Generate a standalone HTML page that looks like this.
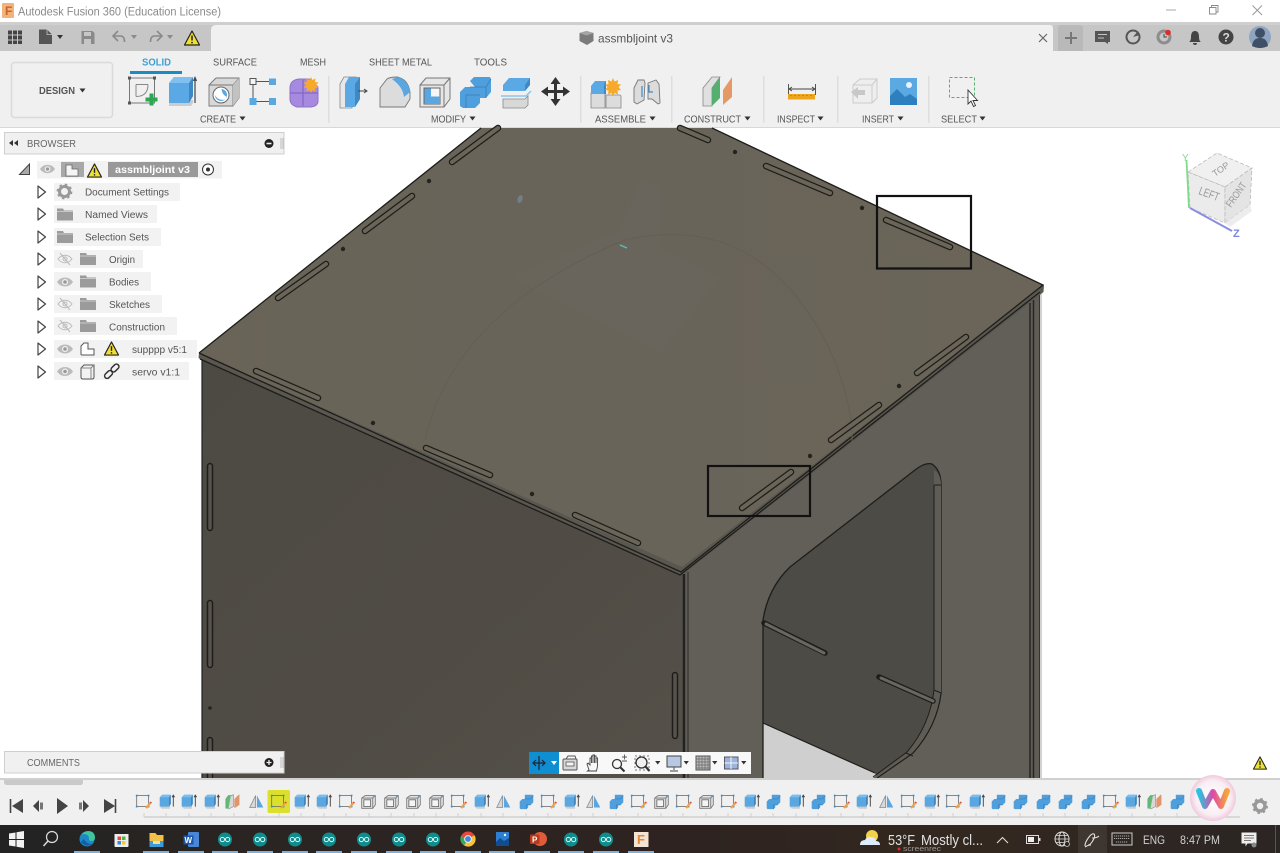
<!DOCTYPE html>
<html><head><meta charset="utf-8"><title>Autodesk Fusion 360</title>
<style>
html,body{margin:0;padding:0;background:#fff;width:1280px;height:853px;overflow:hidden}
svg{display:block;position:absolute;left:0;top:0;filter:blur(.35px)}
text{font-family:"Liberation Sans",sans-serif}
.tb{font-size:10px;fill:#555}
.lb{font-size:10px;fill:#555}
.tr{font-size:10px;fill:#555}
</style></head><body>
<svg width="1280" height="853" viewBox="0 0 1280 853" xmlns="http://www.w3.org/2000/svg">
<defs>
<linearGradient id="tbg" x1="0" x2="1" y1="0" y2="0"><stop offset="0" stop-color="#232323"/><stop offset=".2" stop-color="#2a2422"/><stop offset=".55" stop-color="#2e2320"/><stop offset=".75" stop-color="#33281f"/><stop offset="1" stop-color="#2b2523"/></linearGradient>
<linearGradient id="wg" x1="0" x2="1" y1="0" y2="0"><stop offset="0" stop-color="#27c4e0"/><stop offset=".5" stop-color="#e04aa8"/><stop offset="1" stop-color="#f6a53a"/></linearGradient>
<radialGradient id="wb"><stop offset="0" stop-color="#fff"/><stop offset=".75" stop-color="#f8eef4"/><stop offset="1" stop-color="#f2c9dc"/></radialGradient>
<linearGradient id="lf" x1="0" x2="1" y1="0" y2="1"><stop offset="0" stop-color="#4d4a44"/><stop offset=".6" stop-color="#504c45"/><stop offset="1" stop-color="#55514a"/></linearGradient>
<linearGradient id="topf" x1="0" x2="1" y1="0" y2="0"><stop offset="0" stop-color="#696457"/><stop offset=".5" stop-color="#69645a"/><stop offset="1" stop-color="#6a6558"/></linearGradient>

<symbol id="sk" viewBox="0 0 20 20" overflow="visible"><rect x="2" y="3" width="14" height="13" fill="none" stroke="#666" stroke-width=".9"/><rect x="1" y="2" width="2" height="2" fill="#2f8fd0"/><rect x="15" y="2" width="2" height="2" fill="#2f8fd0"/><rect x="1" y="15" width="2" height="2" fill="#2f8fd0"/><rect x="15" y="15" width="2" height="2" fill="#2f8fd0"/><path d="M12 17l5-6 2 1.500-5 6z" fill="#f0a040"/><path d="M17 11l2 1.500 1-1.500-2-1z" fill="#e05040"/></symbol>
<symbol id="ext" viewBox="0 0 20 20" overflow="visible"><path d="M3 15v2.500l2 1h9v-3.500z" fill="#ccc"/><path d="M2 5l3-3h10v11l-2 3H2z" fill="#5aa6e0"/><path d="M15 2v11l-2 3V5z" fill="#3f86c0"/><path d="M2 5l3-3h10l-2 3z" fill="#7cbcec"/><path d="M18 16V3M16.500 5L18 2.500 19.500 5" stroke="#444" fill="none" stroke-width="1.100"/></symbol>
<symbol id="cmb" viewBox="0 0 20 20" overflow="visible"><path d="M8 2h9l1 1v8l-3 3h-3v3l-2 2H3l-1-1V10l3-3h3z" fill="#4f9fdc"/><path d="M8 7h7l3-4M10 19v-5h5" stroke="#3a80bb" fill="none" stroke-width=".8"/></symbol>
<symbol id="tri" viewBox="0 0 20 20" overflow="visible"><path d="M9 3v14H2z" fill="#d8d8d8" stroke="#888" stroke-width=".9"/><path d="M10.500 3v14H18z" fill="#5aa6e0"/></symbol>
<symbol id="shl" viewBox="0 0 20 20" overflow="visible"><path d="M2 6l4-3h12v11l-3 4H2z" fill="#e2e2e2" stroke="#777"/><path d="M6 3v0M15 18V6l3-3M2 6h13" stroke="#777" fill="none"/><rect x="4.500" y="8" width="8" height="8" fill="#f4f4f4" stroke="#666"/><path d="M18 3l-3 3V4z" fill="#4f9fdc"/></symbol>
<symbol id="con" viewBox="0 0 20 20" overflow="visible"><path d="M1 7l3-4h3v12l-3 3H1z" fill="#66b878" stroke="#4a9a5c" stroke-width=".6"/><path d="M7 3l3-1v14l-6 3" fill="#d8d8d8" stroke="#888" stroke-width=".7"/><path d="M11 7l5-5h1v12l-6 4z" fill="#e0956a"/></symbol>
<symbol id="warn" viewBox="0 0 16 16" overflow="visible"><path d="M8 1L15.500 15H.500z" fill="#f0e030" stroke="#222" stroke-width="1.200" stroke-linejoin="round"/><path d="M8 5.500v5" stroke="#222" stroke-width="1.500"/><circle cx="8" cy="12.600" r=".9" fill="#222"/></symbol>
<symbol id="exp" viewBox="0 0 10 14" overflow="visible"><path d="M1 1l7.500 6L1 13z" fill="#fff" stroke="#444" stroke-width="1.200" stroke-linejoin="round"/></symbol>
<symbol id="eye" viewBox="0 0 16 10" overflow="visible"><path d="M0 5c4-6 12-6 16 0-4 6-12 6-16 0z" fill="#bbb"/><circle cx="8" cy="5" r="3" fill="#f2f2f2"/><circle cx="8" cy="5" r="1.800" fill="#999"/></symbol>
<symbol id="eyeo" viewBox="0 0 16 12" overflow="visible"><path d="M1 6c4-5 10-5 14 0-4 5-10 5-14 0z" fill="none" stroke="#bbb"/><circle cx="8" cy="6" r="2" fill="none" stroke="#bbb"/><path d="M3 0l10 12" stroke="#bbb"/></symbol>
<symbol id="fld" viewBox="0 0 16 12" overflow="visible"><path d="M0 0h6l1 2h9v10H0z" fill="#9b9b9b"/><rect y="2.500" width="16" height="1" fill="#c8c8c8"/></symbol>
<symbol id="ard" viewBox="0 0 16 16" overflow="visible"><circle cx="8" cy="8" r="7.500" fill="#0f8c8c"/><circle cx="5.200" cy="8" r="2.300" fill="none" stroke="#d8f4f4" stroke-width="1.100"/><circle cx="10.800" cy="8" r="2.300" fill="none" stroke="#d8f4f4" stroke-width="1.100"/></symbol>
<symbol id="tt" viewBox="0 0 6 4" overflow="visible"><path d="M0 0h6L3 4z" fill="#333"/></symbol>
</defs>

<!-- title bar -->
<rect width="1280" height="22" fill="#fff"/>
<rect x="2" y="3" width="12" height="15" rx="1" fill="#f3b27a"/>
<text x="5" y="15" style="font-size:12px;font-weight:bold" fill="#c9622a">F</text>
<text x="18" y="15.500" style="font-size:11.500px" fill="#8a8a8a" textLength="203" lengthAdjust="spacingAndGlyphs">Autodesk Fusion 360 (Education License)</text>
<path d="M1166 10h10" stroke="#aaa" stroke-width="1"/>
<path d="M1209.500 7.500h6.500v6.500h-6.500zM1211.500 7.500v-2h6.500v6.500h-2" fill="none" stroke="#888" stroke-width=".9"/>
<path d="M1252.500 5.500l9.500 9.500M1262 5.500l-9.500 9.500" stroke="#999" stroke-width="1"/>

<!-- top bar -->
<rect y="22" width="1280" height="3" fill="#cfcfcf"/>
<rect y="25" width="1280" height="26" fill="#c6c6c6"/>
<path d="M211 51V30q0-5 5-5h834q3 0 3 3v23z" fill="#f0f0f0"/>
<g fill="#444"><rect x="8" y="30.500" width="4" height="4"/><rect x="13" y="30.500" width="4" height="4"/><rect x="18" y="30.500" width="4" height="4"/><rect x="8" y="35.500" width="4" height="4"/><rect x="13" y="35.500" width="4" height="4"/><rect x="18" y="35.500" width="4" height="4"/><rect x="8" y="40.500" width="4" height="3.500"/><rect x="13" y="40.500" width="4" height="3.500"/><rect x="18" y="40.500" width="4" height="3.500"/></g>
<path d="M39 29.500h8l5 5V44H39z" fill="#555"/><path d="M47 29.500v5h5" fill="none" stroke="#c6c6c6" stroke-width=".8"/>
<use href="#tt" x="57" y="35" width="6" height="4"/>
<path d="M81.500 31h11l2 2v11h-13z" fill="#8a8a8a"/><rect x="84" y="32" width="7" height="4" fill="#c6c6c6"/><rect x="84" y="39" width="7" height="5" fill="#c6c6c6"/>
<path d="M118 31l-5 5 5 5M113.500 36h7q4 0 4 6" fill="none" stroke="#8a8a8a" stroke-width="1.600"/>
<path d="M131 35h6l-3 4z" fill="#8a8a8a"/>
<path d="M157 31l5 5-5 5M161.500 36h-7q-4 0-4 6" fill="none" stroke="#8a8a8a" stroke-width="1.600"/>
<path d="M167 35h6l-3 4z" fill="#8a8a8a"/>
<use href="#warn" x="184" y="30" width="16" height="16"/>
<path d="M579.500 33l7-2 7 2v8l-6.500 4-7.500-4z" fill="#7b7b7b"/><path d="M579.500 33l7 2.500 7-2.500-7-2z" fill="#a5a5a5"/>
<text x="598" y="42.500" style="font-size:12px" fill="#555" textLength="75" lengthAdjust="spacingAndGlyphs">assmbljoint v3</text>
<path d="M1039 34l8 8M1047 34l-8 8" stroke="#666" stroke-width="1.200"/>
<path d="M1058 51V28q0-3 3-3h19q3 0 3 3v23z" fill="#b9b9b9"/>
<path d="M1071 32v12M1065 38h12" stroke="#777" stroke-width="2"/>
<path d="M1095 31h15v11h-2v2l-3-2h-10z" fill="#555"/><path d="M1098 34.500h9M1098 38h6" stroke="#c6c6c6"/>
<circle cx="1133" cy="37" r="6.500" fill="none" stroke="#555" stroke-width="2"/><path d="M1133 37l5-6 2 4z" fill="#555"/>
<circle cx="1164" cy="37" r="7.500" fill="#8d8d8d"/><circle cx="1164" cy="37" r="4.500" fill="#c6c6c6"/><path d="M1164 34v3h3" stroke="#444" fill="none"/><circle cx="1168" cy="32.500" r="2.800" fill="#dd2c2c"/>
<path d="M1189 42q2-1 2-5 0-6 4-6t4 6q0 4 2 5zM1193 43h4q0 2-2 2t-2-2z" fill="#444"/>
<circle cx="1226" cy="37" r="7.500" fill="#444"/><text x="1222.500" y="41.500" style="font-size:12px;font-weight:bold" fill="#d8d8d8">?</text>
<circle cx="1260" cy="37" r="11" fill="#8ea4c0"/><circle cx="1260" cy="33" r="5" fill="#3e4f66"/><path d="M1252 46q1-8 8-8t8 8q-4 2-8 2t-8-2z" fill="#3e4f66"/>

<!-- toolbar -->
<rect y="51" width="1280" height="76" fill="#f0f0f0"/>
<rect y="127" width="1280" height="1.500" fill="#d8d8d8"/>
<rect x="11.500" y="62.500" width="101" height="55" rx="3" fill="#f0f0f0" stroke="#dadada" stroke-width="1.500"/>
<text x="39" y="94" style="font-size:10.500px;font-weight:bold" fill="#555" textLength="36" lengthAdjust="spacingAndGlyphs">DESIGN</text>
<use href="#tt" x="79.500" y="88.500" width="6" height="4"/>
<text x="142" y="65.500" style="font-size:10.500px;font-weight:bold" fill="#3d9fd3" textLength="29" lengthAdjust="spacingAndGlyphs">SOLID</text>
<rect x="130" y="71" width="52" height="3" fill="#1a8cc4"/>
<text class="tb" x="213" y="65.500" textLength="44" lengthAdjust="spacingAndGlyphs">SURFACE</text>
<text class="tb" x="300" y="65.500" textLength="26" lengthAdjust="spacingAndGlyphs">MESH</text>
<text class="tb" x="369" y="65.500" textLength="63" lengthAdjust="spacingAndGlyphs">SHEET METAL</text>
<text class="tb" x="474" y="65.500" textLength="33" lengthAdjust="spacingAndGlyphs">TOOLS</text>

<text class="lb" x="200" y="122.500" textLength="36" lengthAdjust="spacingAndGlyphs">CREATE</text><use href="#tt" x="239.500" y="116.500" width="6" height="4"/>
<text class="lb" x="431" y="122.500" textLength="35" lengthAdjust="spacingAndGlyphs">MODIFY</text><use href="#tt" x="469.500" y="116.500" width="6" height="4"/>
<text class="lb" x="595" y="122.500" textLength="51" lengthAdjust="spacingAndGlyphs">ASSEMBLE</text><use href="#tt" x="649.500" y="116.500" width="6" height="4"/>
<text class="lb" x="684" y="122.500" textLength="57" lengthAdjust="spacingAndGlyphs">CONSTRUCT</text><use href="#tt" x="744.500" y="116.500" width="6" height="4"/>
<text class="lb" x="777" y="122.500" textLength="38" lengthAdjust="spacingAndGlyphs">INSPECT</text><use href="#tt" x="817.500" y="116.500" width="6" height="4"/>
<text class="lb" x="862" y="122.500" textLength="32" lengthAdjust="spacingAndGlyphs">INSERT</text><use href="#tt" x="897.500" y="116.500" width="6" height="4"/>
<text class="lb" x="941" y="122.500" textLength="36" lengthAdjust="spacingAndGlyphs">SELECT</text><use href="#tt" x="979.500" y="116.500" width="6" height="4"/>
<g fill="#dedede"><rect x="328" y="76" width="1.500" height="47"/><rect x="580" y="76" width="1.500" height="47"/><rect x="671" y="76" width="1.500" height="47"/><rect x="763" y="76" width="1.500" height="47"/><rect x="837" y="76" width="1.500" height="47"/><rect x="928" y="76" width="1.500" height="47"/></g>

<!-- create icons -->
<rect x="129.500" y="78" width="25" height="25" fill="none" stroke="#777" stroke-width="1"/>
<g fill="#555"><rect x="128" y="76.500" width="3" height="3"/><rect x="153" y="76.500" width="3" height="3"/><rect x="128" y="101.500" width="3" height="3"/></g>
<path d="M136 84.500h12M136 84.500v12M148 84.500q0 12-12 12" fill="none" stroke="#888" stroke-width="1"/>
<path d="M149.500 93.500h4v4h4v4h-4v4h-4v-4h-4v-4h4z" fill="#2aa84f"/>
<path d="M169 100v6h22l2-3v-3z" fill="#ccc"/>
<path d="M169 83l5-6h19v19l-4 7h-20z" fill="#5aa8e4"/><path d="M193 77v19l-4 7V83z" fill="#3f88c6"/><path d="M169 83l5-6h19l-4 6z" fill="#80c0f0"/>
<path d="M195 103V78M193.500 81l1.500-3.500 1.500 3.500" stroke="#444" fill="none" stroke-width="1.200"/>
<path d="M209 85l7-7h23v20l-6 8h-24z" fill="#d8d8d8" stroke="#777" stroke-width=".9"/><path d="M209 85h24v21M233 85l6-7" stroke="#777" fill="none" stroke-width=".9"/><path d="M233 85v21l6-8V78z" fill="#c2c2c2"/>
<circle cx="221" cy="95" r="8" fill="#fff" stroke="#666"/><path d="M215 95a6 6 0 1 0 6.500-6c1 5 2 6 5.500 8-2 5-10 3-12-2z" fill="#5aa6e0"/>
<rect x="250" y="78.500" width="6" height="6" fill="#f4f4f4" stroke="#555"/><rect x="269" y="78.500" width="7" height="6.500" fill="#5aa8e0"/><rect x="249.500" y="98" width="7" height="7" fill="#5aa8e0"/><rect x="269" y="98" width="7" height="7" fill="#5aa8e0"/>
<path d="M256 81.500h13M253 85v13M256.500 101.500h12.500" stroke="#555"/>
<path d="M290 88q0-8 9-9l10 0 9 8v14q0 5-7 6h-14q-7-2-7-8z" fill="#a58ae0" stroke="#8f72c8"/><path d="M290 93h28M303 80v26" stroke="#7d5fc0"/>
<path d="M311 77l1.500 3 3-1.500-.5 3.500 3.500.5-2.500 2.500 2.500 2.500-3.500.5.5 3.500-3-1.500-1.500 3-1.500-3-3 1.500.5-3.500-3.500-.5 2.500-2.500-2.500-2.500 3.500-.5-.5-3.500 3 1.500z" fill="#f6a92a"/>
<!-- modify icons -->
<path d="M340 84l4-7h12l-4 7v24h-12z" fill="#e8e8e8" stroke="#888" stroke-width=".8"/>
<path d="M345 84l4-7h11v22l-5 8h-10z" fill="#5aa8e4"/><path d="M360 77v22l-5 8V84z" fill="#3f88c6"/>
<path d="M358 91h9M364 89l3 2-3 2" stroke="#444" fill="none"/>
<path d="M380 88l7-9q3-2 10-2 11 2 13 15v7l-5 8h-25z" fill="#dcdcdc" stroke="#777" stroke-width=".9"/>
<path d="M392 79q8-3 10 0 7 4 8 13l-6 5q-1-10-12-18z" fill="#5aa6e0"/>
<path d="M420 85l6-7h24v21l-6 8h-24z" fill="#e6e6e6" stroke="#777"/><path d="M420 85h24v22M444 85l6-7" fill="none" stroke="#777"/>
<rect x="424" y="88" width="16" height="16" fill="#f6f6f6" stroke="#666"/><path d="M424.500 88.500h6.500v8h9v7.500h-15.500z" fill="#5aa6e0"/>
<path d="M470 81l4-4h16l1 2v13l-5 6h-6v5l-5 5h-12l-3-2V92l5-5h10z" fill="#4f9fdc"/><path d="M470 87h16l5-8M486 98V87M466 108V95h14" stroke="#3a7fb8" fill="none" stroke-width=".8"/>
<path d="M503 85l6-7h19l2 0v7l-5 6h-22z" fill="#5aa8e4"/><path d="M525 85l5-7v7l-5 6z" fill="#3f88c6"/>
<path d="M501 96h25l5-5" stroke="#8ac4ec" fill="none" stroke-width="1.500"/>
<path d="M503 99h22l3-3v9l-3 3h-22z" fill="#d8d8d8" stroke="#888" stroke-width=".8"/>
<g fill="#333"><path d="M555.500 77l5 7h-3.500v6h6v-3.500l7 5-7 5v-3.500h-6v6h3.500l-5 7-5-7h3.500v-6h-6v3.500l-7-5 7-5v3.500h6v-6h-3.500z"/></g>
<!-- assemble -->
<path d="M591 93h14v15h-14zM606 95h14l1 1v12h-15z" fill="#dcdcdc" stroke="#888" stroke-width=".8"/>
<path d="M591 86l4-5h11v13h-15z" fill="#5aa8e4"/><path d="M606 81v13l-2 0V84z" fill="#3f88c6"/>
<path d="M613 78l1.500 3.500 3.500-1.500-.5 4 3.500.5-2.500 2.500 2.500 3-3.500.5.5 4-3.500-1.500-1.500 3.500-1.500-3.500-3.500 1.500.5-4-3.500-.5 2.500-3-2.500-2.500 3.500-.5-.5-4 3.500 1.500z" fill="#f6a92a"/>
<path d="M634 88l4-8h6l1 3-1 17-7 4-3-2z" fill="#dcdcdc" stroke="#777" stroke-width=".9"/>
<path d="M648 83l8-3 3 4 1 19-2 1-6-5-4 0z" fill="#dcdcdc" stroke="#777" stroke-width=".9"/>
<path d="M642 86v11M649 85v7h4" stroke="#3f88c6" fill="none" stroke-width="1.200"/>
<!-- construct -->
<path d="M703 88l9-11h8l-8 11v18h-9z" fill="#e0e0e0" stroke="#888" stroke-width=".8"/><path d="M712 88l8-11v21l-8 8z" fill="#55b070"/><path d="M723 90l9-13v20l-9 8z" fill="#e59a66"/>
<!-- inspect -->
<path d="M788.500 84v11M815.500 84v11M790 89h24M792 87l-3 2 3 2M812 87l3 2-3 2" stroke="#444" fill="none" stroke-width=".9"/>
<rect x="788" y="94" width="27" height="5.500" fill="#eea51e"/>
<path d="M791 95v1M795 95v1M799 95v1M803 95v1M807 95v1M811 95v1" stroke="#a06a10"/>
<!-- insert -->
<path d="M853 85l7-6h17v19l-5 5h-19z" fill="#eee" stroke="#ccc"/><path d="M853 85h19v18M872 85l5-6" stroke="#ccc" fill="none"/>
<path d="M851 92l7-5v3h7v5h-7v4z" fill="#c8c8c8"/>
<rect x="890" y="78" width="27" height="27" fill="#5aa9e2"/><circle cx="909" cy="85" r="3" fill="#e8f4ff"/><path d="M890 105V96l7-7 8 8 5-3 7 5v6z" fill="#2d7fbd"/>
<!-- select -->
<rect x="949.500" y="77.500" width="25" height="20" fill="none" stroke="#55b070" stroke-dasharray="3 2"/>
<path d="M968 90v14l3-3 2.500 5.500 2-1-2.500-5h4.500z" fill="#fff" stroke="#333" stroke-width=".9"/>

<!-- viewport -->
<rect y="128" width="1280" height="651" fill="#fff"/>
<!-- model -->
<rect x="763" y="720" width="120" height="58" fill="#cfcfcf"/>
<path d="M202 355L686 570V778H202z" fill="url(#lf)"/>
<path d="M684 570L1031 296V778H684z" fill="#625f58"/>
<path d="M1031 296l9-8V778h-9z" fill="#5f5c55"/>
<path d="M1030 303V778M1033.500 300V778" stroke="#262522" stroke-width="1.500"/>
<path d="M1039.500 292V778" stroke="#333" stroke-width="1"/>
<path d="M1041 290V778" stroke="#a5a5a5" stroke-width="1"/>
<path d="M199 353L481 128H712L1043 285 1040 292 681 572z" fill="url(#topf)"/>
<path d="M199 353l-.5 5 3 2 479 215 3-1 360-282 .5-7-362 282z" fill="#5a5750"/>
<path d="M199 353L481 128M712 128L1043 285 681 572 199 353" fill="none" stroke="#1e1d1a" stroke-width="1.300"/>
<path d="M200 359L680 575 1040 292" fill="none" stroke="#1e1d1a" stroke-width="1.300"/>
<path d="M684 574V778" stroke="#222" stroke-width="2.500"/><path d="M688 572V778" stroke="#2a2926" stroke-width="1"/>
<path d="M202 360V778" stroke="#222" stroke-width="1.200"/>
<!-- ghost -->
<g opacity=".05"><path d="M515 275l105-45 20-50 20 8v60l60 30-60 75-140-70z" fill="#7a8a88"/></g>
<path d="M425 440q30-130 200-200 130-30 200 100 35 70 25 130" fill="none" stroke="#645f53" stroke-width="1"/>
<ellipse cx="520" cy="199" rx="2.500" ry="4" transform="rotate(20 520 199)" fill="#717f86"/><path d="M620 245l7 3" stroke="#58c0b4" stroke-width="1.300"/>
<!-- opening -->
<path d="M763 778V620Q768 588 790 567L915 470Q925 462 932 464 941 470 941 485V693Q937 726 913 753L877 778H875L763 723Z" fill="#4d4b45"/>
<path d="M763 723L875 773 877 778H763z" fill="#cfcfcf"/>
<path d="M763 778V620Q768 588 790 567L915 470Q925 462 932 464 941 470 941 485V693Q937 726 913 753L877 778" fill="none" stroke="#1e1d1a" stroke-width="1.300"/>
<path d="M763 723L875 773" stroke="#1e1d1a" stroke-width="1.200"/>
<path d="M934 470Q941 474 941 485V693Q937 726 913 753L877 778H873L907 752Q930 725 934 690z" fill="#5f5c55"/>
<path d="M941 693Q937 726 913 753L877 778M934 485V690Q930 725 907 752L873 777M934 485L941 485M934 690L941 693M906 753L913 756" fill="none" stroke="#1e1d1a" stroke-width="1"/>
<path d="M764 623L825 653" stroke="#1e1d1a" stroke-width="5.500" stroke-linecap="round"/><path d="M766 624L824 653" stroke="#6a675f" stroke-width="3" stroke-linecap="round"/>
<path d="M879 677L933 701" stroke="#1e1d1a" stroke-width="5.500" stroke-linecap="round"/><path d="M881 678L933 701" stroke="#6a675f" stroke-width="3" stroke-linecap="round"/>
<!-- top slots -->
<g fill="none" stroke-linecap="round">
<g stroke="#1e1d1a" stroke-width="6.500">
<path d="M452 162L498 128M365 231L412 196M278 298L326 264M256 371L318 398M426 448L490 475M575 515L638 543M742 508L791 472M831 440L879 405M917 373L966 337M886 220L950 247M766 166L830 193M680 128L708 140M210 466V528M210 603V665M210 740V778M675 675V736"/>
</g>
<g stroke="#6a6558" stroke-width="4">
<path d="M452 162L498 128M365 231L412 196M278 298L326 264M256 371L318 398M426 448L490 475M575 515L638 543M742 508L791 472M831 440L879 405M917 373L966 337M886 220L950 247M766 166L830 193M680 128L708 140"/>
</g>
<g stroke="#57534c" stroke-width="3.500"><path d="M210 466V528M210 603V665M210 740V778M675 675V736"/></g>
</g>
<g fill="#24231f"><circle cx="429" cy="181" r="2.200"/><circle cx="343" cy="249" r="2.200"/><circle cx="373" cy="423" r="2.200"/><circle cx="532" cy="494" r="2.200"/><circle cx="810" cy="456" r="2.200"/><circle cx="899" cy="386" r="2.200"/><circle cx="862" cy="208" r="2.200"/><circle cx="735" cy="152" r="2.200"/><circle cx="210" cy="708" r="1.800"/></g>
<rect x="877" y="196" width="94" height="72.500" fill="none" stroke="#111" stroke-width="2.200"/>
<rect x="708" y="466" width="102" height="50" fill="none" stroke="#111" stroke-width="2.200"/>

<!-- viewcube -->
<path d="M1188 172l29-19 35 15-27 19z" fill="#f0f0f0" stroke="#bbb" stroke-dasharray="4 2" stroke-width=".8"/>
<path d="M1188 172l37 15v36l-35-15z" fill="#ebebeb" stroke="#bbb" stroke-dasharray="4 2" stroke-width=".8"/>
<path d="M1225 187l27-19-2 37-25 18z" fill="#e4e4e4" stroke="#bbb" stroke-dasharray="4 2" stroke-width=".8"/>
<path d="M1225 223l25-18 2 6-22 16z" fill="#ededed"/>
<text x="0" y="0" transform="translate(1215 177) rotate(-35)" style="font-size:9px" fill="#999">TOP</text>
<text x="0" y="0" transform="translate(1198 194) rotate(20) scale(.95 1.300)" style="font-size:9px" fill="#999">LEFT</text>
<text x="0" y="0" transform="translate(1231 208) rotate(-55) scale(.95 1.200)" style="font-size:8.500px" fill="#999">FRONT</text>
<path d="M1186.500 160l2.500 48" stroke="#80dc8c" stroke-width="1.800"/>
<path d="M1190 208l42 23" stroke="#8a8ee0" stroke-width="2"/>
<text x="1182" y="161" style="font-size:10px" fill="#80dc8c">Y</text>
<text x="1233" y="237" style="font-size:11px;font-weight:bold" fill="#7e86e0">Z</text>

<!-- browser -->
<rect x="4.500" y="132.500" width="279.500" height="21.500" fill="#f0f0f0" stroke="#cfcfcf"/>
<path d="M13 140v6l-4-3zM18 140v6l-4-3z" fill="#333"/>
<text x="27" y="147" style="font-size:10px" fill="#666" textLength="49" lengthAdjust="spacingAndGlyphs">BROWSER</text>
<circle cx="269" cy="143.500" r="4.500" fill="#222"/><rect x="266.500" y="142.700" width="5" height="1.600" fill="#f0f0f0"/>
<path d="M281 138v11M283 138v11" stroke="#bbb"/>

<g fill="#f2f2f2"><rect x="37" y="161" width="185" height="17.500"/><rect x="54" y="183" width="126" height="18"/><rect x="54" y="205" width="103" height="18"/><rect x="54" y="228" width="107" height="18"/><rect x="54" y="250" width="89" height="18"/><rect x="54" y="272" width="97" height="19"/><rect x="54" y="295" width="108" height="18"/><rect x="54" y="317" width="123" height="18"/><rect x="54" y="340" width="143" height="18"/><rect x="54" y="362" width="135" height="18"/></g>
<path d="M19.500 174.500L29.500 164v10.500z" fill="#aaa" stroke="#444" stroke-width="1"/>
<use href="#eye" x="40" y="164" width="15" height="10"/>
<rect x="61" y="162" width="23" height="15" fill="#a8a8a8"/>
<path d="M66 165h6v4h6v7H66z" fill="#f4f4f4" stroke="#666" stroke-width=".8"/>
<use href="#warn" x="87" y="163" width="15" height="15"/>
<rect x="108" y="162" width="90" height="15" fill="#999"/>
<text x="115" y="173" style="font-size:10px;font-weight:bold" fill="#fff" textLength="75" lengthAdjust="spacingAndGlyphs">assmbljoint v3</text>
<circle cx="208" cy="169.500" r="5.500" fill="#fff" stroke="#333"/><circle cx="208" cy="169.500" r="2" fill="#333"/>

<use href="#exp" x="37" y="185" width="10" height="14"/>
<use href="#exp" x="37" y="207" width="10" height="14"/>
<use href="#exp" x="37" y="230" width="10" height="14"/>
<use href="#exp" x="37" y="252" width="10" height="14"/>
<use href="#exp" x="37" y="275" width="10" height="14"/>
<use href="#exp" x="37" y="297" width="10" height="14"/>
<use href="#exp" x="37" y="320" width="10" height="14"/>
<use href="#exp" x="37" y="342" width="10" height="14"/>
<use href="#exp" x="37" y="365" width="10" height="14"/>
<circle cx="64.500" cy="191.500" r="5" fill="none" stroke="#999" stroke-width="3"/><circle cx="64.500" cy="191.500" r="7" fill="none" stroke="#999" stroke-width="1.800" stroke-dasharray="2.500 3"/>
<use href="#fld" x="57" y="208.500" width="16" height="12"/>
<use href="#fld" x="57" y="231" width="16" height="12"/>
<use href="#eyeo" x="57" y="253" width="16" height="12"/><use href="#fld" x="80" y="253" width="16" height="12"/>
<use href="#eye" x="57" y="277" width="16" height="10"/><use href="#fld" x="80" y="275.500" width="16" height="12"/>
<use href="#eyeo" x="57" y="298" width="16" height="12"/><use href="#fld" x="80" y="298" width="16" height="12"/>
<use href="#eyeo" x="57" y="320" width="16" height="12"/><use href="#fld" x="80" y="320" width="16" height="12"/>
<use href="#eye" x="57" y="344" width="16" height="10"/>
<path d="M81 346l3-3h4v6h6v6q0 0-1 0H82q-1 0-1-1z" fill="#fff" stroke="#555"/>
<use href="#warn" x="104" y="341" width="15" height="15"/>
<use href="#eye" x="57" y="366.500" width="16" height="10"/>
<path d="M81 368l3-3h10v12q0 2-2 2H83q-2 0-2-2z" fill="#f2f2f2" stroke="#555"/><path d="M81 368h10l3-3M91 368v11" stroke="#888" fill="none"/>
<rect x="104" y="372" width="9" height="5" rx="2.500" transform="rotate(-45 108.500 374.500)" fill="none" stroke="#333" stroke-width="1.500"/>
<rect x="110.500" y="365.500" width="9" height="5" rx="2.500" transform="rotate(-45 115 368)" fill="none" stroke="#333" stroke-width="1.500"/>
<g class="tr">
<text class="tr" x="85" y="195.500" textLength="84" lengthAdjust="spacingAndGlyphs">Document Settings</text>
<text class="tr" x="85" y="218" textLength="63" lengthAdjust="spacingAndGlyphs">Named Views</text>
<text class="tr" x="85" y="240.500" textLength="64" lengthAdjust="spacingAndGlyphs">Selection Sets</text>
<text class="tr" x="109" y="263" textLength="26" lengthAdjust="spacingAndGlyphs">Origin</text>
<text class="tr" x="109" y="285.500" textLength="30" lengthAdjust="spacingAndGlyphs">Bodies</text>
<text class="tr" x="109" y="308" textLength="41" lengthAdjust="spacingAndGlyphs">Sketches</text>
<text class="tr" x="109" y="330.500" textLength="56" lengthAdjust="spacingAndGlyphs">Construction</text>
<text class="tr" x="132" y="353" textLength="55" lengthAdjust="spacingAndGlyphs">supppp v5:1</text>
<text class="tr" x="132" y="375.500" textLength="48" lengthAdjust="spacingAndGlyphs">servo v1:1</text>
</g>

<!-- comments -->
<rect x="4.500" y="751.500" width="279.500" height="21.500" fill="#f0f0f0" stroke="#cfcfcf"/>
<text x="27" y="766" style="font-size:10px" fill="#666" textLength="53" lengthAdjust="spacingAndGlyphs">COMMENTS</text>
<circle cx="269" cy="762.500" r="4.500" fill="#222"/><path d="M266.500 762.500h5M269 760v5" stroke="#f0f0f0" stroke-width="1.300"/>
<path d="M281 757v11M283 757v11" stroke="#bbb"/>

<!-- nav bar -->
<rect x="529" y="752" width="222" height="22" fill="#f8f8f8"/>
<rect x="529" y="752" width="30" height="22" fill="#0f8fd2"/>
<path d="M539 756v14M533 763h12M536 760l-3 3 3 3M542 760l3 3-3 3" stroke="#223" fill="none" stroke-width="1.200"/>
<path d="M551 761h6l-3 4z" fill="#fff"/>
<rect x="563" y="759" width="14" height="11" rx="1" fill="#d8d8d8" stroke="#555"/><rect x="566" y="762" width="8" height="4" fill="#f4f4f4" stroke="#555" stroke-width=".8"/><path d="M566 759l2-3h7l1 3" fill="none" stroke="#555"/>
<path d="M589 770l-2-6 1-1 2 2v-7h1.500v5-7h1.500v7-8h1.500v8-7h1.500v7-5h1.500v8l-1 5h-9z" fill="#f8f8f8" stroke="#444" stroke-width=".9"/>
<circle cx="617" cy="764" r="4.500" fill="none" stroke="#333" stroke-width="1.300"/><path d="M620.500 767.500l4 4" stroke="#333" stroke-width="2"/><path d="M622 757h5M624.500 754.500v5M622 761h5" stroke="#555" stroke-width=".9"/>
<rect x="635" y="756" width="14" height="14" fill="none" stroke="#777" stroke-dasharray="2 2"/>
<circle cx="641.500" cy="762.500" r="5.500" fill="#f0f0f0" stroke="#333" stroke-width="1.300"/><path d="M645.500 766.500l4 4.500" stroke="#333" stroke-width="2.200"/>
<use href="#tt" x="655" y="761" width="5.500" height="3.500"/>
<rect x="667" y="756" width="14" height="11" fill="#b8c8e4" stroke="#444"/><path d="M674 767v3M670 771h8" stroke="#666" stroke-width="1.200"/>
<use href="#tt" x="683.500" y="761" width="5.500" height="3.500"/>
<rect x="696" y="756" width="14" height="14" fill="#bbb" stroke="#555"/><path d="M699 756v14M702 756v14M705 756v14M708 756v14M696 759h14M696 762h14M696 765h14M696 768h14" stroke="#666" stroke-width=".7"/>
<use href="#tt" x="712" y="761" width="5.500" height="3.500"/>
<rect x="724.500" y="757" width="13.500" height="12" fill="#9cb4dc" stroke="#556"/><path d="M724.500 763h13.500M731 757v12" stroke="#f4f4f4"/>
<use href="#tt" x="741" y="761" width="5.500" height="3.500"/>
<use href="#warn" x="1252" y="756" width="16" height="14"/>

<!-- timeline -->
<rect y="778" width="1280" height="2" fill="#d0d0d0"/>
<rect y="780" width="1280" height="45" fill="#f0f0f0"/>
<path d="M4 780h79v2q0 3-3 3H7q-3 0-3-3z" fill="#c9c9c9"/>
<path d="M10.500 799v14" stroke="#444" stroke-width="1.600"/><path d="M23 799v14l-11-7z" fill="#444"/>
<path d="M39 800v12l-6-6z" fill="#444"/><rect x="40" y="802.500" width="3" height="7" fill="#777"/>
<path d="M57 798l11 8-11 8z" fill="#444"/>
<rect x="79" y="802.500" width="3" height="7" fill="#777"/><path d="M83 800v12l6-6z" fill="#444"/>
<path d="M104 799v14l11-7z" fill="#444"/><path d="M115.500 799v14" stroke="#444" stroke-width="1.600"/>
<path d="M144 817H1240" stroke="#cfcfcf" stroke-width="1.500"/>
<path d="M144 813v4M166 813v4M189 813v4M211 813v4M234 813v4M256 813v4M279 813v4M301 813v4M324 813v4M346 813v4M369 813v4M391 813v4M414 813v4M436 813v4M458 813v4M481 813v4M503 813v4M526 813v4M548 813v4M571 813v4M593 813v4M616 813v4M638 813v4M661 813v4M683 813v4M706 813v4M728 813v4M751 813v4M773 813v4M796 813v4M818 813v4M841 813v4M863 813v4M886 813v4M908 813v4M931 813v4M953 813v4M976 813v4M998 813v4M1020 813v4M1043 813v4M1065 813v4M1088 813v4M1110 813v4M1132 813v4M1155 813v4M1177 813v4" stroke="#cfcfcf"/>
<rect x="267.500" y="790" width="22.500" height="23" rx="2" fill="#dce02c"/>
<use href="#sk" x="135" y="793" width="17" height="17"/>
<use href="#ext" x="158" y="793" width="17" height="17"/>
<use href="#ext" x="180" y="793" width="17" height="17"/>
<use href="#ext" x="203" y="793" width="17" height="17"/>
<use href="#con" x="225" y="793" width="17" height="17"/>
<use href="#tri" x="248" y="793" width="17" height="17"/>
<use href="#sk" x="270" y="793" width="17" height="17"/>
<use href="#ext" x="293" y="793" width="17" height="17"/>
<use href="#ext" x="315" y="793" width="17" height="17"/>
<use href="#sk" x="338" y="793" width="17" height="17"/>
<use href="#shl" x="360" y="793" width="17" height="17"/>
<use href="#shl" x="383" y="793" width="17" height="17"/>
<use href="#shl" x="405" y="793" width="17" height="17"/>
<use href="#shl" x="428" y="793" width="17" height="17"/>
<use href="#sk" x="450" y="793" width="17" height="17"/>
<use href="#ext" x="473" y="793" width="17" height="17"/>
<use href="#tri" x="495" y="793" width="17" height="17"/>
<use href="#cmb" x="518" y="793" width="17" height="17"/>
<use href="#sk" x="540" y="793" width="17" height="17"/>
<use href="#ext" x="563" y="793" width="17" height="17"/>
<use href="#tri" x="585" y="793" width="17" height="17"/>
<use href="#cmb" x="608" y="793" width="17" height="17"/>
<use href="#sk" x="630" y="793" width="17" height="17"/>
<use href="#shl" x="653" y="793" width="17" height="17"/>
<use href="#sk" x="675" y="793" width="17" height="17"/>
<use href="#shl" x="698" y="793" width="17" height="17"/>
<use href="#sk" x="720" y="793" width="17" height="17"/>
<use href="#ext" x="743" y="793" width="17" height="17"/>
<use href="#cmb" x="765" y="793" width="17" height="17"/>
<use href="#ext" x="788" y="793" width="17" height="17"/>
<use href="#cmb" x="810" y="793" width="17" height="17"/>
<use href="#sk" x="833" y="793" width="17" height="17"/>
<use href="#ext" x="855" y="793" width="17" height="17"/>
<use href="#tri" x="878" y="793" width="17" height="17"/>
<use href="#sk" x="900" y="793" width="17" height="17"/>
<use href="#ext" x="923" y="793" width="17" height="17"/>
<use href="#sk" x="945" y="793" width="17" height="17"/>
<use href="#ext" x="968" y="793" width="17" height="17"/>
<use href="#cmb" x="990" y="793" width="17" height="17"/>
<use href="#cmb" x="1012" y="793" width="17" height="17"/>
<use href="#cmb" x="1035" y="793" width="17" height="17"/>
<use href="#cmb" x="1057" y="793" width="17" height="17"/>
<use href="#cmb" x="1080" y="793" width="17" height="17"/>
<use href="#sk" x="1102" y="793" width="17" height="17"/>
<use href="#ext" x="1124" y="793" width="17" height="17"/>
<use href="#con" x="1147" y="793" width="17" height="17"/>
<use href="#cmb" x="1169" y="793" width="17" height="17"/>
<circle cx="1213" cy="798" r="23" fill="url(#wb)"/>
<path d="M1199 791l6 15 8-14 8 14 6-15" fill="none" stroke="url(#wg)" stroke-width="6" stroke-linecap="round" stroke-linejoin="round"/>
<circle cx="1260" cy="806" r="5" fill="none" stroke="#999" stroke-width="3.500"/><circle cx="1260" cy="806" r="7" fill="none" stroke="#999" stroke-width="2" stroke-dasharray="2.500 3"/>

<!-- taskbar -->
<rect y="825" width="1280" height="28" fill="url(#tbg)"/>
<g fill="#f2f2f2"><path d="M9 833.500l6.500-1v6.500H9zM16.500 832.300l7.500-1.300v8h-7.500zM9 840h6.500v6.500l-6.500-1zM16.500 840H24v8l-7.500-1.300z"/></g>
<circle cx="52" cy="837" r="5.500" fill="none" stroke="#ddd" stroke-width="1.200"/><path d="M48 841l-4.500 5" stroke="#ddd" stroke-width="1.500"/>
<circle cx="87" cy="839" r="7.500" fill="#1c88c8"/><path d="M80 837q3-6 8-6 7 0 7 7 0 3-4 3-2 0-2-2 0-5-5-5-3 0-4 3z" fill="#3fc4a0"/><path d="M81 842q5 6 11 2-6 0-8-5z" fill="#0e5fa8"/>
<path d="M114.500 834h14v12q0 1-1 1h-12q-1 0-1-1z" fill="#eee"/><rect x="117.500" y="836.500" width="3.500" height="3.500" fill="#e44"/><rect x="122" y="836.500" width="3.500" height="3.500" fill="#4b4"/><rect x="117.500" y="841" width="3.500" height="3.500" fill="#38d"/><rect x="122" y="841" width="3.500" height="3.500" fill="#ec3"/>
<path d="M149.500 833h6l1.500 2h6.500v12h-14z" fill="#f2c248"/><rect x="149.500" y="841" width="14" height="6" fill="#3f9ad8"/><rect x="153" y="841" width="7" height="3" fill="#f2e0a0"/>
<rect x="188" y="832" width="11" height="15" rx="1" fill="#4a86d8"/><rect x="183.500" y="835.500" width="10" height="9" fill="#1c56a8"/><text x="184.500" y="843" style="font-size:8px;font-weight:bold" fill="#fff">W</text>
<use href="#ard" x="217.500" y="832" width="15" height="15"/>
<use href="#ard" x="252.500" y="832" width="15" height="15"/>
<use href="#ard" x="287.500" y="832" width="15" height="15"/>
<use href="#ard" x="321.500" y="832" width="15" height="15"/>
<use href="#ard" x="356.500" y="832" width="15" height="15"/>
<use href="#ard" x="391.500" y="832" width="15" height="15"/>
<use href="#ard" x="425.500" y="832" width="15" height="15"/>
<circle cx="468" cy="839" r="7.500" fill="#e8483c"/><path d="M468 839l6.500-3.800A7.500 7.500 0 0 1 464 845.400z" fill="#f6c33a"/><path d="M468 839l-4 6.400A7.500 7.500 0 0 1 461 836z" fill="#38a85a"/><circle cx="468" cy="839" r="3.400" fill="#3f88e0" stroke="#eee"/>
<rect x="496" y="832" width="13" height="14" fill="#2f7fd0"/><path d="M496 846v-4l4-4 4 3 5-3v8z" fill="#0f4c90"/><circle cx="505" cy="835" r="1.200" fill="#dff"/>
<circle cx="540" cy="839" r="7" fill="#e05b3a"/><rect x="530" y="834.500" width="9.500" height="9.500" rx="1" fill="#b83a1c"/><text x="532" y="842.500" style="font-size:8px;font-weight:bold" fill="#fff">P</text>
<use href="#ard" x="563.500" y="832" width="15" height="15"/>
<use href="#ard" x="598.500" y="832" width="15" height="15"/>
<rect x="634" y="832" width="14.500" height="15" fill="#f4e4d4"/><text x="637" y="844" style="font-size:13px;font-weight:bold" fill="#e0893a">F</text>
<g fill="#7fb0d8"><rect x="74" y="851" width="26" height="2"/><rect x="143" y="851" width="26" height="2"/><rect x="178" y="851" width="26" height="2"/><rect x="212" y="851" width="26" height="2"/><rect x="247" y="851" width="26" height="2"/><rect x="282" y="851" width="26" height="2"/><rect x="316" y="851" width="26" height="2"/><rect x="351" y="851" width="26" height="2"/><rect x="386" y="851" width="26" height="2"/><rect x="420" y="851" width="26" height="2"/><rect x="455" y="851" width="26" height="2"/><rect x="489" y="851" width="26" height="2"/><rect x="524" y="851" width="26" height="2"/><rect x="558" y="851" width="26" height="2"/><rect x="593" y="851" width="26" height="2"/><rect x="628" y="851" width="26" height="2"/></g>

<circle cx="872" cy="836" r="6" fill="#f2d24a"/><path d="M860 845q0-5 5-5 2-4 6-3 4 0 5 4 4 0 4 4z" fill="#dfeafa"/>
<text x="888" y="845" style="font-size:14.500px" fill="#e0e0e0" textLength="27" lengthAdjust="spacingAndGlyphs">53°F</text>
<text x="921" y="845" style="font-size:14.500px" fill="#e0e0e0" textLength="62" lengthAdjust="spacingAndGlyphs">Mostly cl...</text>
<circle cx="899" cy="849" r="1.500" fill="#e02828"/>
<text x="903" y="851" style="font-size:7.500px" fill="#9a9a9a" textLength="38" lengthAdjust="spacingAndGlyphs">screenrec</text>
<path d="M997 843l5.500-5.500 5.500 5.500" fill="none" stroke="#ddd" stroke-width="1.100"/>
<rect x="1026.500" y="835.500" width="12" height="8" fill="none" stroke="#ddd"/><rect x="1028" y="837" width="6" height="5" fill="#eee"/><rect x="1039" y="838" width="1.500" height="3" fill="#ddd"/>
<circle cx="1062" cy="839" r="7" fill="none" stroke="#ddd"/><ellipse cx="1062" cy="839" rx="3" ry="7" fill="none" stroke="#ddd"/><path d="M1055 839h14M1056 835.500h12M1056 842.500h12" stroke="#ddd" stroke-width=".8"/><circle cx="1067" cy="844" r="2.500" fill="#2b2523" stroke="#ccc" stroke-width=".8"/>
<rect x="1078" y="825" width="29" height="28" fill="#fff" opacity=".07"/>
<path d="M1085 846q0-4 4-9 3-4 5-3 2 2-2 8-2 3-4 3M1092 838q5 0 7-2M1085 847q3-2 6-2" fill="none" stroke="#e0e0e0" stroke-width="1.100"/>
<rect x="1112" y="833" width="20" height="12" fill="none" stroke="#ccc"/><path d="M1114 836h16M1114 838.500h16M1116 842h12" stroke="#aaa" stroke-dasharray="1.200 .8"/>
<text x="1143" y="844" style="font-size:12px" fill="#d0d0d0" textLength="22" lengthAdjust="spacingAndGlyphs">ENG</text>
<text x="1180" y="844" style="font-size:12px" fill="#d0d0d0" textLength="40" lengthAdjust="spacingAndGlyphs">8:47 PM</text>
<path d="M1241.500 832.500h15v11h-9l-2 3v-3h-4z" fill="#eee"/><path d="M1244 835.500h10M1244 838h10M1244 840.500h7" stroke="#555" stroke-width=".8"/><circle cx="1254" cy="845" r="2.500" fill="#888"/>
<path d="M1275.500 825v28" stroke="#555"/>
</svg>
</body></html>
